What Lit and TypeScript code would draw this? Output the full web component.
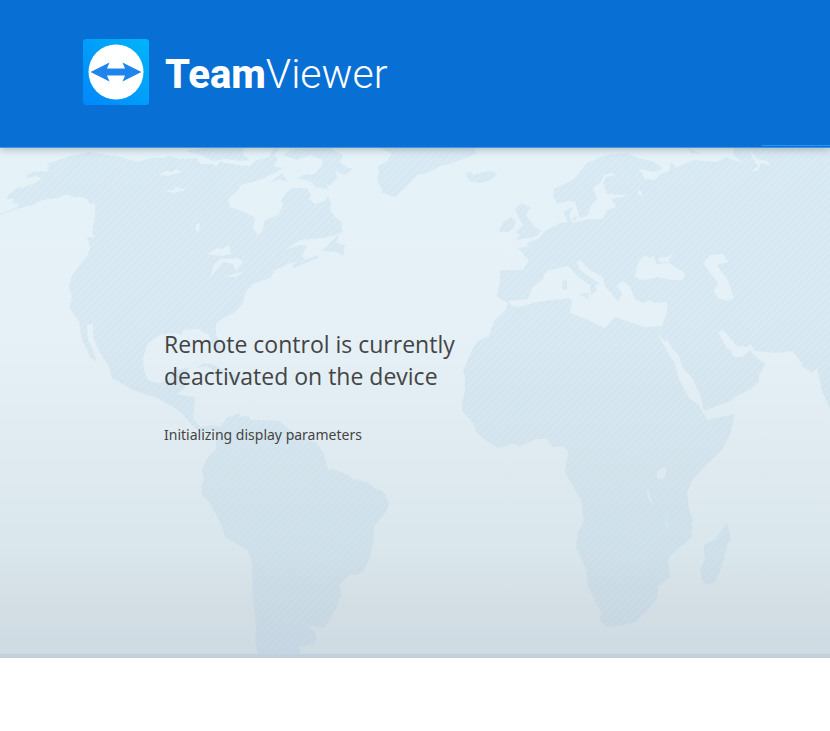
import { LitElement, html, css } from "lit";
import { customElement } from "lit/decorators.js";

@customElement("brand-logo")
class BrandLogo extends LitElement {
  static styles = css`
    :host {
      display: flex;
      align-items: center;
      gap: 16px;
      color: #fff;
    }
    .mark {
      width: 66px;
      height: 66px;
      flex: none;
    }
    .name {
      padding-top: 4px;
      font-family: Roboto, "Liberation Sans", sans-serif;
      font-size: 41px;
      line-height: 48px;
      font-weight: 300;
      white-space: nowrap;
    }
    .strong {
      font-size: 40px;
      font-weight: 800;
    }
  `;

  render() {
    return html`
      <svg class="mark" viewBox="0 0 66 66" aria-hidden="true">
        <defs>
          <linearGradient id="tile" x1="0" y1="1" x2="1" y2="0">
            <stop offset="0" stop-color="#0087fa" />
            <stop offset="1" stop-color="#00b5fa" />
          </linearGradient>
        </defs>
        <rect width="66" height="66" rx="3" fill="url(#tile)" />
        <circle cx="33" cy="33" r="27.500" fill="#fff" />
        <path
          d="M7.500 33 L26.500 23.500 L24 29.500 H42 L39.500 23.500 L58.500 33 L39.500 42.500 L42 36.500 H24 L26.500 42.500 Z"
          fill="#1f85ec"
        />
      </svg>
      <span class="name"><span class="strong">Team</span>Viewer</span>
    `;
  }
}

@customElement("world-map")
class WorldMap extends LitElement {
  static styles = css`
    :host {
      display: block;
    }
    .map {
      display: block;
      width: 100%;
      height: 100%;
    }
    .land {
      fill: #9fc4e3;
      fill-opacity: 0.16;
    }
    .hatch {
      fill: url(#stripes);
    }
  `;

  render() {
    return html`
      <svg class="map" viewBox="0 148 830 506" preserveAspectRatio="xMinYMin slice" aria-hidden="true">
        <defs>
          <pattern id="stripes" width="5" height="5" patternUnits="userSpaceOnUse" patternTransform="rotate(45)">
            <rect width="3" height="5" fill="#8fb9dc" fill-opacity="0.06" />
          </pattern>
          <path
            id="continents"
            fill-rule="evenodd"
            d="M0 214L15 208 20 204 12 203 14 199 7 199 8 195 17 188 25 187 35 183 42 179 37 176 27 178 26 175 33 172 50 171 47 169 50 166 47 164 67 157 80 154 90 152 100 154 120 157 138 162 150 158 163 158 170 156 180 159 197 158 200 164 213 164 216 167 220 162 237 165 250 166 257 160 270 157 272 150 279 148 274 155 278 160 273 166 283 168 276 172 264 178 253 182 240 185 238 190 228 199 230 207 247 213 255 218 253 228 258 235 262 231 265 220 278 215 283 205 281 201 287 192 292 188 307 188 311 195 309 199 315 204 325 201 328 196 331 203 330 210 335 217 343 223 341 227 343 232 332 236 323 238 300 240 285 250 300 245 307 246 305 249 302 256 306 260 317 255 318 258 293 268 292 265 298 262 290 263 275 270 270 278 255 283 247 290 244 297 243 303 235 312 220 320 216 324 216 334 221 347 219 353 212 345 209 335 203 332 199 329 183 330 182 335 174 333 162 334 148 343 143 358 144 370 148 380 157 383 168 381 173 370 189 368 187 376 185 388 177 394 195 397 194 407 193 419 201 427 213 425 220 427 227 418 240 413 239 417 248 416 251 420 266 420 280 421 287 428 300 437 317 443 324 454 327 464 328 470 333 469 348 475 354 480 367 482 376 489 383 491 389 503 386 512 374 527 373 545 370 557 364 571 357 575 350 575 340 584 341 596 337 606 332 616 324 628 308 625 315 632 317 639 313 644 299 647 301 655 258 655 255 641 256 625 253 600 252 563 248 550 225 537 222 526 210 503 202 495 201 486 204 480 202 469 206 460 216 449 216 432 210 430 207 433 197 430 187 420 183 414 173 407 157 398 133 390 112 378 109 366 100 353 93 337 93 324 87 325 88 340 93 350 97 362 90 357 87 350 82 340 79 321 70 309 72 296 69 288 71 278 78 267 88 255 90 247 87 237 95 237 99 248 97 241 92 233 95 217 95 203 90 204 87 199 82 197 74 197 67 194 57 198 42 200 35 204 13 210 0 215Z
            M159 175L165 171 172 172 176 169 182 172 168 176Z M164 191L173 190 176 186 180 189 190 188 174 193Z M196 224L200 223 199 231 196 231Z
            M207 254L217 248 222 249 229 245 231 254 223 256Z M210 278L214 264 220 259 238 258 243 262 236 271 233 264 223 262Z M225 277L243 271 237 277Z
            M500 270L523 270 529 260 518 248 528 247 527 243 538 239 545 231 560 223 568 222 563 212 573 207 569 216 573 223 590 219 603 219 607 210 617 207 611 199 630 195 607 194 603 183 606 177 616 175 612 173 604 175 601 182 593 188 597 199 590 207 588 215 580 218 575 202 568 201 558 204 553 197 554 189 573 180 580 172 587 163 607 155 627 153 638 158 652 161 663 168 655 172 638 169 644 175 644 179 655 180 661 174 669 171 671 162 676 168 693 160 717 162 725 157 743 163 733 155 734 148 830 148 830 409 822 391 817 368 812 373 803 367 802 363 792 351 777 353 755 351 751 344 747 347 737 346 723 330 718 332 728 350 730 349 734 357 742 357 750 350 757 358 766 364 759 375 759 382 750 390 738 395 730 401 704 411 700 394 692 378 683 368 679 356 672 348 666 338 665 342 657 332 669 355 674 362 679 379 689 398 699 405 707 420 735 414 731 432 722 450 706 465 692 481 687 492 689 511 692 517 692 537 676 550 668 558 670 577 658 586 657 598 646 613 635 622 623 625 607 627 600 621 601 612 588 587 586 570 576 547 578 533 584 520 581 500 570 481 565 473 568 451 563 446 553 447 547 439 537 439 520 446 512 444 498 448 484 439 476 432 474 424 462 411 462 402 465 392 465 377 463 371 472 350 478 341 489 336 494 321 506 310 508 303 497 297 500 281Z
            M508 301L512 306 520 307 537 302 570 298 572 303 570 313 580 317 588 320 605 328 615 317 630 322 645 327 662 326 667 312 667 302 655 303 650 300 643 303 635 299 630 287 623 281 617 285 622 294 618 302 611 293 605 287 603 277 590 270 580 260 577 262 580 270 600 284 595 285 597 290 591 295 590 285 577 276 568 266 550 270 545 273 543 279 532 288 528 299Z
            M635 276L638 262 645 255 649 258 654 256 656 264 669 263 685 273 683 280 672 280 658 277 650 279 640 280Z M658 258L667 257 673 254 668 262 660 262Z
            M703 263L710 255 723 254 728 262 717 265 723 274 727 278 731 290 734 298 727 301 718 298 714 291 718 283 708 270Z
            M750 149L755 157 760 160 768 161 770 166 761 163 758 171 751 171 758 166 752 157Z M637 192L640 190 643 194 640 196Z
            M657 471L666 467 666 474 663 480 657 478Z M647 486L650 496 654 507 648 498Z M667 513L668 533 666 525Z"
          />
          <path
            id="islands"
            d="M283 155L293 149 330 148 343 155 340 162 346 167 353 169 344 175 336 171 337 178 330 186 326 184 329 189 315 187 312 182 298 178 303 175 315 174 322 166 322 160 310 155 297 160Z
            M270 183L282 173 288 182 279 179Z M186 151L205 148 244 148 243 155 250 160 241 161 225 159 213 161 200 155Z
            M322 251L330 243 339 234 336 243 345 245 343 256 336 252Z
            M381 148L392 154 387 161 378 167 379 172 377 179 383 193 395 197 403 190 417 175 427 173 440 166 453 163 468 157 477 154 474 148Z
            M465 174L470 171 473 175 484 172 493 171 497 175 491 180 480 183 470 181Z
            M515 209L521 203 525 205 530 207 526 215 535 227 541 231 537 236 528 238 515 240 520 235 516 232 523 225 518 216Z
            M499 232L503 222 511 217 516 221 513 229 508 232Z M579 294L589 293 588 299Z M562 281L567 280 567 290 563 290Z
            M572 218L577 216 575 222Z M727 523L731 538 728 543 721 568 715 582 707 585 702 580 700 569 705 560 704 545 715 540Z
            M195 368L205 363 214 365 226 372 216 372 206 366Z M230 373L243 378 236 382 228 379Z M687 148L702 154 692 153Z"
          />
        </defs>
        <use class="land" href="#continents" />
        <use class="land" href="#islands" />
        <use class="hatch" href="#continents" />
        <use class="hatch" href="#islands" />
      </svg>
    `;
  }
}

@customElement("app-root")
class AppRoot extends LitElement {
  static styles = css`
    :host {
      display: block;
      min-height: 100vh;
      background: #fff;
      font-family: "Segoe UI", "Open Sans", "Noto Sans", sans-serif;
      color: #444;
    }
    .banner {
      position: relative;
      padding: 39px 83px 42px;
      background: #086fd5;
      border-bottom: 1px solid #4a94dc;
      box-shadow: 0 1px 8px rgba(70, 80, 90, 0.4);
      z-index: 1;
    }
    .banner::after {
      content: "";
      position: absolute;
      right: 0;
      bottom: 1px;
      width: 68px;
      height: 1px;
      background: #1e9af5;
    }
    .stage {
      display: grid;
      background: linear-gradient(
        #e5f2f8 0%,
        #e5f1f7 36%,
        #dfebf0 60%,
        #d9e6ec 80%,
        #d3dee4 91%,
        #cfdbe3 100%
      );
      border-bottom: 4px solid #c1d0dc;
    }
    .backdrop,
    .status {
      grid-area: 1 / 1;
      min-width: 0;
    }
    .backdrop {
      height: 0;
      min-height: 100%;
      overflow: hidden;
    }
    .status {
      padding: 180px 164px 208px;
      z-index: 0;
    }
    .title {
      max-width: 320px;
      margin: 0 0 32px;
      font-size: 23px;
      line-height: 32px;
      font-weight: 400;
    }
    .detail {
      margin: 0;
      font-family: "Segoe UI", "Noto Sans", sans-serif;
      font-size: 14px;
      line-height: 22px;
    }
  `;

  render() {
    return html`
      <header class="banner"><brand-logo></brand-logo></header>
      <main class="stage">
        <world-map class="backdrop"></world-map>
        <section class="status">
          <h1 class="title">Remote control is currently deactivated on the device</h1>
          <p class="detail" role="status">Initializing display parameters</p>
        </section>
      </main>
    `;
  }
}
